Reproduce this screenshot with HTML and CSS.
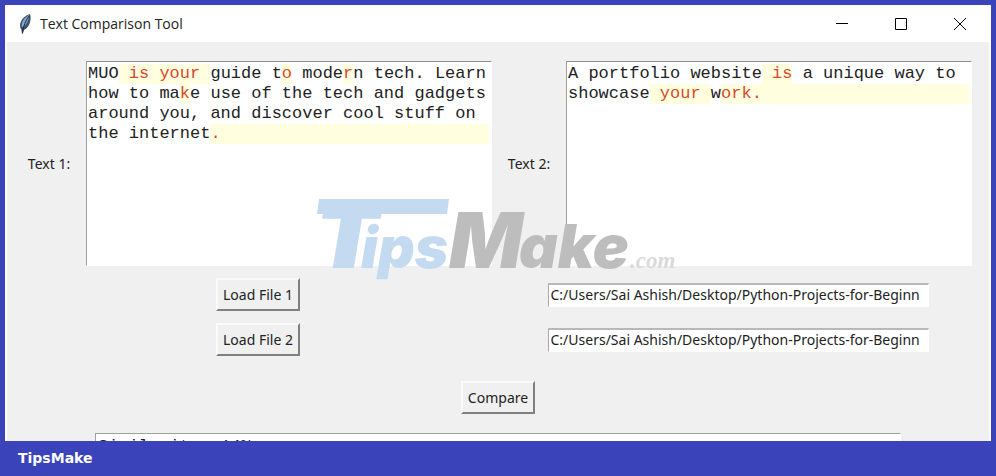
FILE: index.html
```html
<!DOCTYPE html>
<html lang="en">
<head>
<meta charset="utf-8">
<title>Text Comparison Tool</title>
<link rel="stylesheet" href="styles.css">
</head>
<body>
<main class="window">
  <header class="titlebar">
    <svg class="feather" viewBox="0 0 14 22" aria-hidden="true">
      <path d="M4 21L3.500 17C0 12 3 4 12 1C14 7 11 15 6 17L4.500 21Z" fill="#3c5266"/>
      <path d="M4 14C3 9 6 5 11 2C11 6 9 11 5.500 14Z" fill="#86a9cc"/>
      <path d="M4.500 20C5 13 8 7 11 3" fill="none" stroke="#1c2a38" stroke-width="1"/>
    </svg>
    <h1 class="title">Text Comparison Tool</h1>
    <div class="controls">
      <button class="control" type="button" aria-label="Minimize"><svg viewBox="0 0 12 12"><path d="M0 5.500H12"/></svg></button>
      <button class="control" type="button" aria-label="Maximize"><svg viewBox="0 0 12 12"><path d="M.5.5H11.500V11.500H.5Z"/></svg></button>
      <button class="control" type="button" aria-label="Close"><svg viewBox="0 0 12 12"><path d="M0 0L12 12M12 0L0 12"/></svg></button>
    </div>
  </header>
  <div class="client">
    <div class="halves">
      <section class="pane">
        <span class="label" id="label-1">Text 1:</span>
        <div class="editor" role="textbox" aria-multiline="true" aria-labelledby="label-1" contenteditable="true" spellcheck="false"><div class="line">MUO<mark> <b>is your</b> </mark>guide t<mark><b>o</b></mark> mode<mark><b>r</b></mark>n tech. Learn</div><div class="line">how to ma<mark><b>k</b></mark>e use of the tech and gadgets</div><div class="line">around you, and discover cool stuff on</div><div class="line">the internet<mark class="rest"><b>.</b></mark></div></div>
      </section>
      <section class="pane">
        <span class="label" id="label-2">Text 2:</span>
        <div class="editor" role="textbox" aria-multiline="true" aria-labelledby="label-2" contenteditable="true" spellcheck="false"><div class="line">A portfolio website<mark> <b>is</b></mark> a unique way to</div><div class="line">showcase<mark> <b>your</b> </mark>w<mark class="rest"><b>ork.</b></mark></div></div>
      </section>
      <div class="cell"><button class="button" type="button">Load File 1</button></div>
      <div class="cell"><input class="path" type="text" aria-label="File 1 path" value="C:/Users/Sai Ashish/Desktop/Python-Projects-for-Beginn"></div>
      <div class="cell"><button class="button" type="button">Load File 2</button></div>
      <div class="cell"><input class="path" type="text" aria-label="File 2 path" value="C:/Users/Sai Ashish/Desktop/Python-Projects-for-Beginn"></div>
    </div>
    <div class="cell compare"><button class="button" type="button">Compare</button></div>
    <output class="result">Similarity: 14%</output>
  </div>
  <svg class="watermark" viewBox="0 0 370 84" aria-hidden="true">
    <g class="blue">
      <path d="M4 3H134L132 18H2Z"/>
      <text class="initial" x="3" y="70" font-size="86">T</text>
      <text x="46" y="72" font-size="57">ips</text>
    </g>
    <g class="gray">
      <text x="134" y="72" font-size="77">M</text>
      <text x="204" y="72" font-size="60">ake</text>
    </g>
    <text class="domain" x="315" y="72" font-size="23">.com</text>
  </svg>
</main>
<footer class="footer">TipsMake</footer>
</body>
</html>
```
FILE: styles.css
```css
* { box-sizing: border-box; }
body {
  margin: 0;
  height: 100vh;
  display: flex;
  flex-direction: column;
  padding: 5px 5px 0;
  overflow: hidden;
  background: #3a43ba;
  font: 14px/20px "Noto Sans", sans-serif;
  color: #222;
}
.window {
  position: relative;
  flex: 1;
  min-height: 0;
  overflow: hidden;
  background: #fff;
}
.titlebar {
  display: flex;
  align-items: center;
  height: 37px;
  padding: 0 2px 0 13px;
}
.feather { width: 14px; height: 22px; }
.title { margin: 0 0 0 8px; font: 400 14px/20px "Open Sans", sans-serif; }
.controls { display: flex; margin-left: auto; }
.control {
  display: grid;
  place-items: center;
  width: 59px;
  height: 37px;
  padding: 0;
  border: 0;
  background: none;
}
.control svg { width: 12px; height: 12px; fill: none; stroke: #000; overflow: visible; }
.client {
  margin: 0 2px;
  padding: 19px 11px 0;
  min-height: 100%;
  background: #f0f0f0;
}
.halves {
  display: grid;
  grid-template-columns: 1fr 1fr;
  row-gap: 12px;
}
.pane {
  display: grid;
  grid-template-columns: 62px 1fr;
  align-items: center;
}
.label { text-align: center; }
.editor {
  height: 205px;
  margin: 0 6px;
  padding: 2px 2px 2px 1px;
  overflow: hidden;
  background: #fff;
  border: 1px solid #fff;
  border-top-color: #8c8c8c;
  border-left-color: #a0a0a0;
  font: 17px/20px "Liberation Mono", monospace;
}
.line { display: flex; white-space: pre; }
mark { background: #ffffe0; color: inherit; }
mark b { font-weight: 400; color: #d9482b; }
.rest { flex: 1; }
.cell {
  display: flex;
  justify-content: center;
  align-items: center;
}
.button {
  height: 33px;
  padding: 0 5px;
  background: #f0f0f0;
  border: 2px solid #fafafa;
  border-right-color: #808080;
  border-bottom-color: #808080;
  font: inherit;
  color: inherit;
}
.path {
  width: 381px;
  max-width: 100%;
  height: 24px;
  padding: 0 0 2px 2px;
  background: #fff;
  border: 1px solid #fff;
  border-top: 2px solid #b8b8b8;
  border-left-color: #a8a8a8;
  font: inherit;
  color: inherit;
}
.compare { margin-top: 25px; }
.result {
  display: block;
  height: 205px;
  margin: 19px 77px 0;
  padding: 3px 2px;
  background: #fff;
  border: 1px solid #a0a0a0;
  border-right-color: #fff;
  font: 17px/20px "Liberation Mono", monospace;
}
.watermark {
  position: absolute;
  left: 310px;
  top: 191px;
  width: 370px;
  height: 84px;
  font-family: Inter, sans-serif;
  font-weight: 900;
  font-style: italic;
  pointer-events: none;
}
.blue { fill: #c3daf0; }
.initial { stroke: #c3daf0; stroke-width: 4px; }
.gray { fill: #bdbdbd; }
.domain { fill: #dadada; font-family: "Liberation Serif", serif; font-weight: 700; }
.footer {
  height: 35px;
  padding-left: 13px;
  font: 700 14px/35px "DejaVu Sans", sans-serif;
  color: #fff;
}
```
